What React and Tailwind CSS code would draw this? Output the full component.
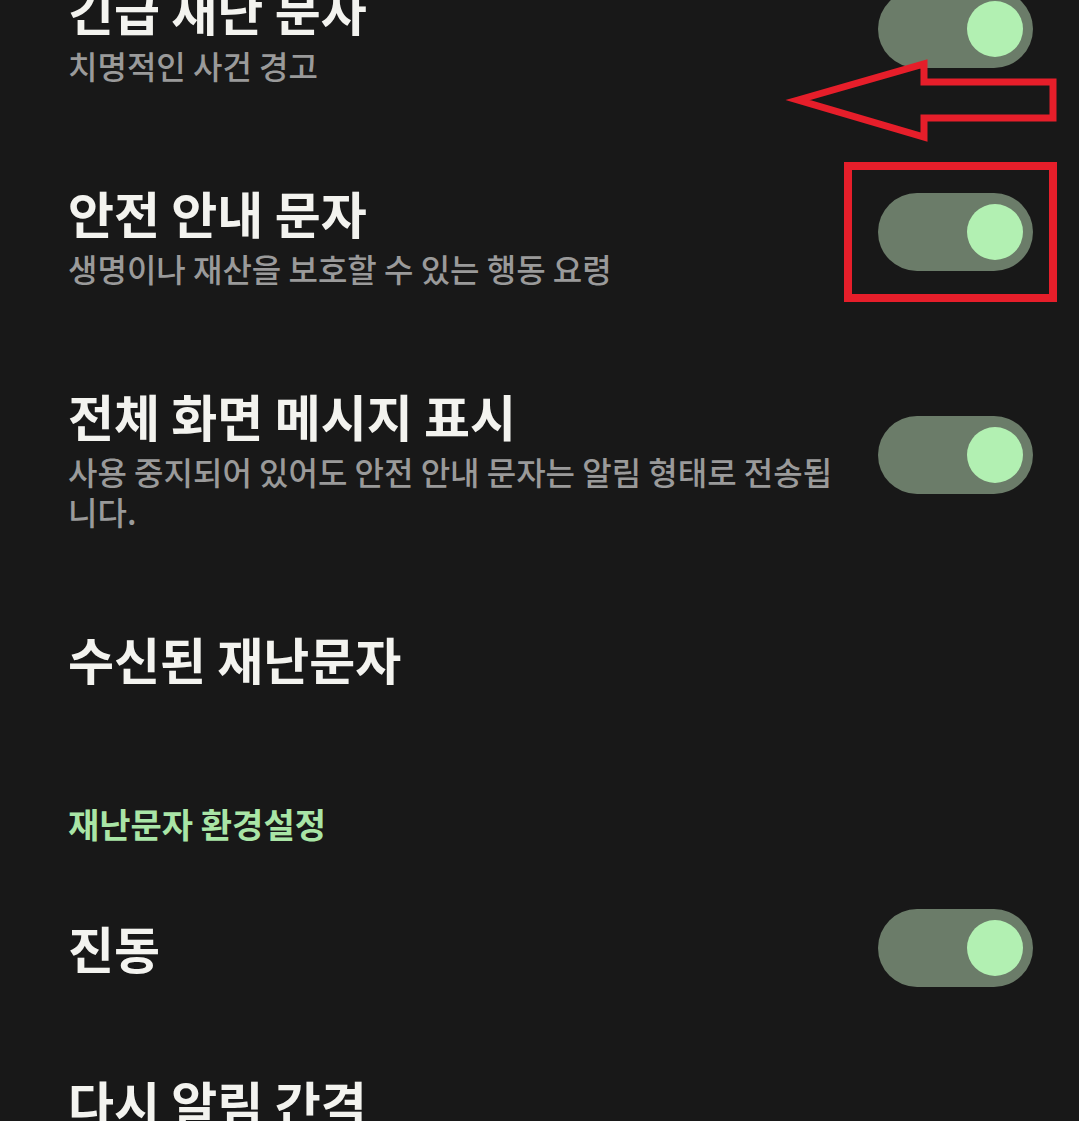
const Toggle = ({ raised }) => (
  <div
    className={`w-[155px] h-[78px] shrink-0 rounded-full bg-[#6b7c69] flex items-center justify-end pr-[10px] ${
      raised ? 'mb-[10px]' : ''
    }`}
  >
    <div className="w-[56px] h-[56px] rounded-full bg-[#b2f0b2]" />
  </div>
);

const SettingRow = ({ title, desc }) => (
  <div className="flex items-center justify-between">
    <div className="w-[770px] py-[50px]">
      <div className="text-[50px] leading-[55px] font-bold text-[#f3f3ef]">{title}</div>
      {desc && (
        <div className="mt-[8px] text-[32px] leading-[40px] font-medium text-[#9a9a9a]">{desc}</div>
      )}
    </div>
    <Toggle raised={!!desc} />
  </div>
);

const TitleRow = ({ title }) => (
  <div className="py-[50px]">
    <div className="text-[50px] leading-[55px] font-bold text-[#f3f3ef]">{title}</div>
  </div>
);

export default function App() {
  return (
    <div className="relative w-[1079px] h-[1121px] overflow-hidden bg-[#181818] font-['Noto_Sans_CJK_KR',sans-serif]">
      <div className="-mt-[68px] pl-[68px] pr-[46px]">
        <SettingRow title="긴급 재난 문자" desc="치명적인 사건 경고" />
        <SettingRow title="안전 안내 문자" desc="생명이나 재산을 보호할 수 있는 행동 요령" />
        <SettingRow
          title="전체 화면 메시지 표시"
          desc="사용 중지되어 있어도 안전 안내 문자는 알림 형태로 전송됩니다."
        />
        <TitleRow title="수신된 재난문자" />
        <div className="pt-[68px] pb-[26px] text-[34px] leading-[40px] font-bold text-[#a9e5a6]">
          재난문자 환경설정
        </div>
        <SettingRow title="진동" />
        <TitleRow title="다시 알림 간격" />
      </div>

      {/* annotations */}
      <svg className="absolute left-0 top-0" width="1079" height="200" viewBox="0 0 1079 200">
        <polygon
          points="798,100 924,64 924,82 1053,82 1053,118 924,118 924,137"
          fill="none"
          stroke="#e61e2a"
          strokeWidth="7"
          strokeLinejoin="miter"
          strokeMiterlimit="10"
        />
      </svg>
      <div className="absolute left-[844px] top-[162px] w-[213px] h-[140px] border-[8px] border-[#e61e2a]" />
    </div>
  );
}
